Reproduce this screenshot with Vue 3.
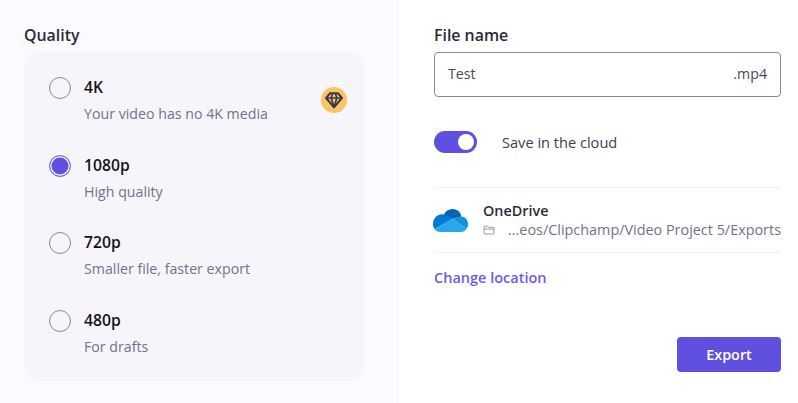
<template>
  <div class="dialog">
    <section class="left">
      <h3 class="label">Quality</h3>
      <div class="card">
        <div v-for="opt in options" :key="opt.id" class="option">
          <span :class="['radio', { checked: opt.id === selected }]"></span>
          <div class="option-text">
            <div class="option-title">{{ opt.title }}</div>
            <div class="option-desc">{{ opt.desc }}</div>
          </div>
          <span v-if="opt.premium" class="badge">
            <svg width="18" height="18" viewBox="0 0 16 16" fill="none" stroke="#3a3850" stroke-width="1.8" stroke-linejoin="round">
              <path d="M4.5 2h7L15 6.200 8 14.500 1 6.200z" />
              <path d="M1 6.200h14M5.500 6.200 8 14.500l2.500-8.300M5.500 6.200 6.800 2M10.500 6.200 9.200 2" stroke-width="1.5" />
            </svg>
          </span>
        </div>
      </div>
    </section>
    <section class="right">
      <h3 class="label">File name</h3>
      <div class="input">
        <span>Test</span>
        <span>.mp4</span>
      </div>
      <div class="cloud-row">
        <span class="toggle"><span class="knob"></span></span>
        <span class="cloud-label">Save in the cloud</span>
      </div>
      <div class="location">
        <svg class="onedrive" width="35" height="23" viewBox="0 0 35 23">
          <path fill="#0364b8" d="M10.500 6C12.500 2.300 15.500 0 19.500 0c4.500 0 8 3 9 7.500L19.500 10z" />
          <path fill="#0078d4" d="M0 15C0 9.500 4.500 5.300 9 5.300c1.200 0 2.300.3 3.300.9l7.200 3.800L1.500 20C.5 18.500 0 17 0 15z" />
          <path fill="#1490df" d="M19.500 10l9-2.500c3.500 0 6.500 3.500 6.500 7.500 0 2-.5 3.500-1.500 4.800z" />
          <path fill="#28a8ea" d="M19.500 10l14 9.800C32.500 21.800 30.500 23 28 23H7c-2.500 0-4.200-1.200-5.500-3z" />
        </svg>
        <div class="location-text">
          <div class="location-name">OneDrive</div>
          <div class="location-path">
            <svg width="12" height="12" viewBox="0 0 12 12" fill="none" stroke="#9a98a8" stroke-width="1">
              <path d="M1 9.500v-7c0-.3.2-.5.5-.5h2.800l1.200 1.300h5c.3 0 .5.2.5.5v5.700c0 .3-.2.5-.5.5h-9c-.3 0-.5-.2-.5-.5zM1 5h10" />
            </svg>
            <span>...eos/Clipchamp/Video Project 5/Exports</span>
          </div>
        </div>
      </div>
      <a class="change">Change location</a>
      <div class="actions">
        <button class="export">Export</button>
      </div>
    </section>
  </div>
</template>

<script setup>
const selected = '1080p'

const options = [
  { id: '4k', title: '4K', desc: 'Your video has no 4K media', premium: true },
  { id: '1080p', title: '1080p', desc: 'High quality' },
  { id: '720p', title: '720p', desc: 'Smaller file, faster export' },
  { id: '480p', title: '480p', desc: 'For drafts' }
]
</script>

<style>
html, body {
  background: #fff;
}
</style>

<style scoped>
.dialog {
  display: flex;
  width: 798px;
  height: 403px;
  overflow: hidden;
  font-family: "Open Sans", "Noto Sans", sans-serif;
  color: #24242f;
}

.left {
  flex: none;
  width: 399px;
  box-sizing: border-box;
  padding: 25px 35px 22px 24px;
  background: #fbfaff;
}

.right {
  flex: 1;
  min-width: 0;
  display: flex;
  flex-direction: column;
  padding: 25px 17px 31px 35px;
  background: #fff;
}

.label {
  margin: 0 0 6px;
  font-size: 15.9px;
  line-height: 21px;
  font-weight: 600;
  color: #2b2a38;
}

.card {
  display: flex;
  flex-direction: column;
  gap: 29.5px;
  height: 329px;
  box-sizing: border-box;
  padding: 24px 17px 0 25px;
  border-radius: 16px;
  background: #f6f5fa;
}

.option {
  display: flex;
  align-items: flex-start;
}

.radio {
  flex: none;
  width: 22px;
  height: 22px;
  box-sizing: border-box;
  margin-top: 1px;
  border: 1.5px solid #8a88a0;
  border-radius: 50%;
}

.radio.checked {
  border-color: #7c6cf0;
  background: #5f50e0;
  box-shadow: inset 0 0 0 1.5px #f6f5fa;
}

.option-text {
  flex: 1;
  margin-left: 13px;
}

.option-title {
  font-size: 15.7px;
  line-height: 22px;
  font-weight: 600;
  color: #14141c;
}

.option-desc {
  margin-top: 6px;
  font-size: 14.2px;
  line-height: 20px;
  color: #74728a;
}

.badge {
  flex: none;
  display: flex;
  align-items: center;
  justify-content: center;
  width: 26px;
  height: 26px;
  margin-top: 11px;
  border-radius: 50%;
  background: #fdc561;
}

.input {
  display: flex;
  justify-content: space-between;
  align-items: center;
  height: 45px;
  box-sizing: border-box;
  padding: 0 13px 2px;
  border: 1px solid #8a88a0;
  border-radius: 4px;
  font-size: 14.2px;
  color: #4a4958;
}

.cloud-row {
  display: flex;
  align-items: center;
  margin-top: 34px;
}

.toggle {
  display: flex;
  justify-content: flex-end;
  align-items: center;
  width: 43px;
  height: 22px;
  box-sizing: border-box;
  padding-right: 3px;
  border-radius: 11px;
  background: #5f50e0;
}

.knob {
  width: 16px;
  height: 16px;
  border-radius: 50%;
  background: #fff;
}

.cloud-label {
  margin-left: 25px;
  font-size: 14.6px;
  color: #3f3e4c;
}

.location {
  display: flex;
  align-items: center;
  height: 64px;
  margin-top: 34px;
  border-top: 1px solid #f1f0f5;
  border-bottom: 1px solid #f1f0f5;
}

.onedrive {
  flex: none;
  margin-left: -1px;
}

.location-text {
  margin-left: 15px;
  min-width: 0;
}

.location-name {
  font-size: 14.4px;
  line-height: 19px;
  font-weight: 600;
  color: #2b2a38;
}

.location-path {
  display: flex;
  align-items: center;
  gap: 13px;
  font-size: 14.4px;
  line-height: 20px;
  white-space: nowrap;
  color: #74728a;
}

.change {
  margin-top: 15px;
  font-size: 14.5px;
  line-height: 20px;
  font-weight: 600;
  color: #6b5ce7;
}

.actions {
  margin-top: auto;
  display: flex;
  justify-content: flex-end;
}

.export {
  width: 104px;
  height: 35px;
  border: none;
  border-radius: 4px;
  background: #5f50e0;
  color: #fff;
  font-family: inherit;
  font-size: 14.4px;
  font-weight: 600;
}
</style>
